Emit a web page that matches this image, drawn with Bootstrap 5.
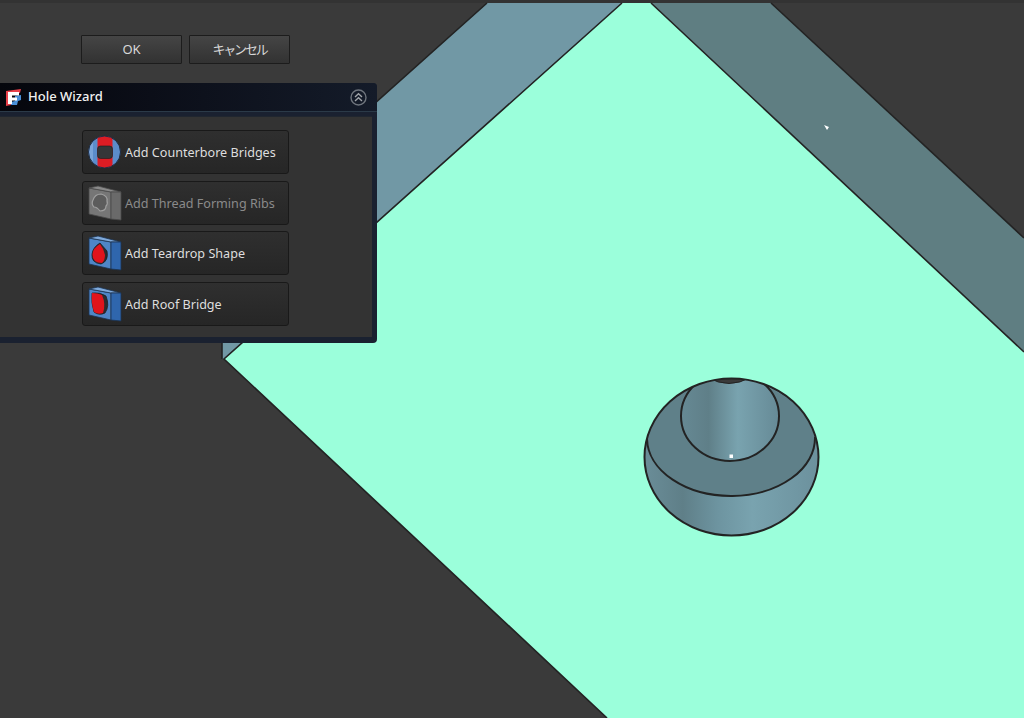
<!DOCTYPE html>
<html lang="en">
<head>
    <meta charset="UTF-8">
    <meta name="viewport" content="width=device-width, initial-scale=1.0">
    <title>Hole Wizard</title>
    <link rel="stylesheet" href="https://cdn.jsdelivr.net/npm/bootstrap@5.3.0/dist/css/bootstrap.min.css">
    <style>
        html, body { height: 100%; }
        body {
            background: #3a3a3a;
            overflow: hidden;
            font-family: "Noto Sans", "Noto Sans CJK JP", sans-serif;
        }
        /* 3D view behind the task panel */
        .view3d { position: absolute; left: 0; top: 0; width: 1024px; height: 718px; }
        .task-col { position: relative; width: 377px; padding-top: 35px; }
        .dlg-btn {
            width: 101px;
            height: 29px;
            padding: 0;
            font-size: 13px;
            color: #d8d8d8;
            background: linear-gradient(#454545, #323232);
            border: 1px solid #1c1c1c;
            border-radius: 1px;
        }
        .kana { letter-spacing: -2.2px; }
        .dlg-row { padding-left: 81px; gap: 7px; margin-bottom: 19px; }
        .wiz-panel {
            height: 260px;
            background: #1a2130;
            border: 0;
            border-radius: 0 4px 4px 0;
        }
        .wiz-head {
            height: 29px;
            padding: 0 10px 0 6px;
            background: linear-gradient(90deg, #05060c, #0b0e18 40%, #141b29);
            border: 0;
            border-bottom: 1px solid #2b3a48;
            border-radius: 0 4px 0 0 !important;
            color: #f0f0f0;
            font-size: 13px;
            font-weight: 500;
            gap: 7px;
        }
        .wiz-body {
            margin: 4px 5px 6px 0;
            padding: 13px 0 0 82px;
            background: #333333;
            border-top: 1px solid #20262f;
            gap: 6.6px;
        }
        .tool-btn {
            width: 207px;
            height: 44px;
            padding: 0 0 0 5px;
            gap: 3px;
            font-size: 12.6px;
            color: #dedede;
            background: linear-gradient(#2f2f2f, #262626);
            border: 1px solid #191919;
            border-radius: 3px;
            text-align: left;
        }
        .tool-btn span { padding-top: 3px; }
        .tool-btn:disabled { opacity: 1; color: #8a8a8a; border-color: #191919; background: linear-gradient(#2f2f2f, #262626); }
    </style>
</head>
<body>

    <!-- 3D view -->
    <svg class="view3d" viewBox="0 0 1024 718">
        <defs>
            <linearGradient id="bandFill" x1="0" x2="1" y1="0" y2="0">
                <stop offset="0" stop-color="#6a8d98"/>
                <stop offset=".22" stop-color="#5f7f88"/>
                <stop offset=".42" stop-color="#6d94a0"/>
                <stop offset=".62" stop-color="#79a3af"/>
                <stop offset="1" stop-color="#6c919d"/>
            </linearGradient>
            <linearGradient id="boreFill" x1="0" x2="1" y1="0" y2="0">
                <stop offset="0" stop-color="#668994"/>
                <stop offset=".28" stop-color="#5f7f88"/>
                <stop offset=".58" stop-color="#79a3af"/>
                <stop offset="1" stop-color="#668a96"/>
            </linearGradient>
            <clipPath id="outerClip"><ellipse cx="731.5" cy="457" rx="87" ry="78.5"/></clipPath>
            <clipPath id="discClip"><circle cx="16.5" cy="17" r="16"/></clipPath>
        </defs>
        <rect x="0" y="0" width="1024" height="3" fill="#333"/>
        <polygon points="224,359 622,3 651,3 1024,352 1024,718 607,718" fill="#9bffdb"/>
        <polygon points="487,3 622,3 224,359 222,359 222,240" fill="#7198a5"/>
        <polygon points="651,3 771,3 1024,238 1024,352" fill="#5f7e82"/>
        <g fill="none" stroke="#232323" stroke-width="1.6">
            <polyline points="487,3 222,240 222,359"/>
            <polyline points="607,718 224,359 622,3"/>
            <polyline points="771,3 1024,238"/>
            <polyline points="651,3 1024,352"/>
        </g>
        <!-- counterbored hole -->
        <ellipse cx="731.5" cy="457" rx="87" ry="78.5" fill="url(#bandFill)"/>
        <path d="M647,439 A84 58 0 0 0 815,437 A87 78.5 0 0 0 647,439 Z" fill="#5f8089"/>
        <g clip-path="url(#outerClip)">
            <ellipse cx="730" cy="416" rx="49" ry="45" fill="url(#boreFill)" stroke="#232323" stroke-width="2"/>
            <path d="M707,377 Q729,390 751,377 L751,370 L707,370 Z" fill="#3a3a3a" stroke="#232323"/>
        </g>
        <path d="M647,439 A84 58 0 0 0 815,437" fill="none" stroke="#232323" stroke-width="2"/>
        <ellipse cx="731.5" cy="457" rx="87" ry="78.5" fill="none" stroke="#232323" stroke-width="2"/>
        <rect x="729.5" y="454.5" width="3.5" height="3.5" fill="#fff"/>
        <polygon points="824,125 829,127 827,130" fill="#fff"/>
    </svg>

    <div class="task-col">
        <div class="d-flex dlg-row">
            <button class="btn dlg-btn">OK</button>
            <button class="btn dlg-btn"><span class="kana">キャンセル</span></button>
        </div>

        <div class="card wiz-panel">
            <div class="card-header wiz-head d-flex align-items-center">
                <svg width="15" height="17" viewBox="0 0 15 17">
                    <polygon points="0,2 15,0 14,4 5,5 5,16 0,17" fill="#e8404a"/>
                    <polygon points="9,7 15,6 15,11 12,12 11,16 5,16 5,13 9,12" fill="#4a90d8"/>
                    <polygon points="2,3 13,3 13,6.5 6,6.5 6,8.5 11,8.5 11,11.5 6,11.5 6,15 2,15" fill="#fff"/>
                </svg>
                <span class="flex-grow-1">Hole Wizard</span>
                <svg width="17" height="17" viewBox="0 0 17 17" fill="none" stroke="#6e747c">
                    <circle cx="8.5" cy="8.5" r="7.5" stroke-width="1.4"/>
                    <path d="M5 8 8.5 4.8 12 8M5 12 8.5 8.8 12 12" stroke="#a0a4a8" stroke-width="1.4"/>
                </svg>
            </div>
            <div class="wiz-body d-flex flex-column flex-grow-1">
                <button class="btn tool-btn d-flex align-items-center">
                    <svg width="34" height="34" viewBox="0 0 34 34" class="flex-shrink-0">
                        <circle cx="16.5" cy="17" r="16" fill="#5b8ccb"/>
                        <g clip-path="url(#discClip)">
                            <rect x="0" y="0" width="5" height="34" fill="#8fb4e2" opacity=".6"/>
                            <rect x="9.5" y="0" width="15" height="34" fill="#dc1c24"/>
                            <rect x="9.5" y="11" width="15" height="12.5" rx="3" fill="#343638" stroke="#1b1b1b" stroke-width=".6"/>
                        </g>
                        <circle cx="16.5" cy="17" r="16" fill="none" stroke="#1d2c44" stroke-width="1"/>
                    </svg>
                    <span>Add Counterbore Bridges</span>
                </button>
                <button class="btn tool-btn d-flex align-items-center" disabled>
                    <svg width="34" height="36" viewBox="0 0 34 36" class="flex-shrink-0">
                        <polygon points="1,3 23,7 23,34 1,29" fill="#767676" stroke="#4a4a4a" stroke-width=".8"/>
                        <polygon points="1,3 10,1 33,7 23,7" fill="#8a8a8a" stroke="#4a4a4a" stroke-width=".8"/>
                        <polygon points="23,7 33,7 33,35 23,34" fill="#6a6a6a" stroke="#4a4a4a" stroke-width=".8"/>
                        <path d="M5,15 Q7,9 13,9 Q20,11 19,16 Q20,19 18,21 Q18,26 12,26 Q9,22 6,22 Q3,19 5,15 Z" fill="#5c5c5c" stroke="#a0a0a0" stroke-width="1.2"/>
                    </svg>
                    <span>Add Thread Forming Ribs</span>
                </button>
                <button class="btn tool-btn d-flex align-items-center">
                    <svg width="34" height="36" viewBox="0 0 34 36" class="flex-shrink-0">
                        <polygon points="1,3 23,7 23,34 1,29" fill="#4f86c6" stroke="#1c3352" stroke-width=".8"/>
                        <polygon points="1,3 10,1 33,7 23,7" fill="#7fa9da" stroke="#1c3352" stroke-width=".8"/>
                        <polygon points="23,7 33,7 33,35 23,34" fill="#2f66ad" stroke="#1c3352" stroke-width=".8"/>
                        <path d="M12,8 L19,16 Q21,26 13,29 Q3,28 4,19 Q5,12 12,8 Z" fill="#2c2c2e" stroke="#1a1a1c" stroke-width=".7"/>
                        <path d="M12,9 Q16,14 17,20 Q17,25 14,28 Q4,28 4.5,19 Q5,13 12,9 Z" fill="#e0141c"/>
                    </svg>
                    <span>Add Teardrop Shape</span>
                </button>
                <button class="btn tool-btn d-flex align-items-center">
                    <svg width="34" height="36" viewBox="0 0 34 36" class="flex-shrink-0">
                        <polygon points="1,3 23,7 23,34 1,29" fill="#4f86c6" stroke="#1c3352" stroke-width=".8"/>
                        <polygon points="1,3 10,1 33,7 23,7" fill="#7fa9da" stroke="#1c3352" stroke-width=".8"/>
                        <polygon points="23,7 33,7 33,35 23,34" fill="#2f66ad" stroke="#1c3352" stroke-width=".8"/>
                        <path d="M4,7 Q12,6 18,10 Q22,20 17,27 Q11,30 6,26 Q3,17 4,7 Z" fill="#2c2c2e" stroke="#1a1a1c" stroke-width=".7"/>
                        <path d="M4,7 Q10,7 14,9 Q18,18 15,27 Q10,29 6,26 Q3,17 4,7 Z" fill="#e0141c"/>
                    </svg>
                    <span>Add Roof Bridge</span>
                </button>
            </div>
        </div>
    </div>

    <script src="https://cdn.jsdelivr.net/npm/bootstrap@5.3.0/dist/js/bootstrap.bundle.min.js"></script>

</body>
</html>
